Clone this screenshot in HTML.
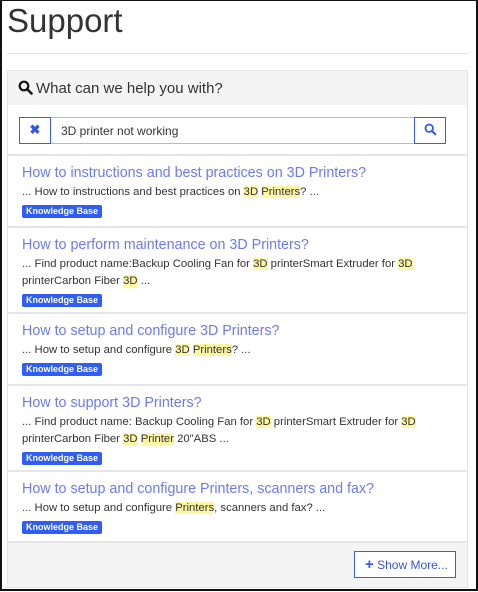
<!DOCTYPE html><html><head><style>
*{box-sizing:border-box;margin:0;padding:0}
body{width:478px;height:592px;background:#fff;font-family:"Liberation Sans",sans-serif;position:relative;overflow:hidden}
.frame{position:absolute;left:0;top:0;width:478px;height:591px;border:2px solid #111;border-top:1px solid #111}
h1{position:absolute;left:7px;top:2px;font-weight:normal;font-size:33px;color:#333;letter-spacing:0}
.hr{position:absolute;left:7px;top:53px;width:461px;height:1px;background:#e2e2e2}
.panel{position:absolute;left:7px;top:70px;width:461px;height:518px;border:1px solid #e4e4e4;background:#f4f4f4}
.head{height:34px;padding:9px 0 0 10px;font-size:15px;color:#333}
.srow{background:#fff;height:51px;position:relative;border-bottom:2px solid #e6e6e6}
.inp{position:absolute;left:11px;top:12px;width:427px;height:27px;border:1px solid #bbb;font-size:12px;color:#333;padding:6px 0 0 41px}
.bx{position:absolute;top:-1px;width:32px;height:27px;border:1px solid #3a5cf0;background:#fff;color:#2f57e8;text-align:center;font-weight:bold}
.item{background:#fff;padding:8px 14px 0;border-bottom:2px solid #e6e6e6}
.t{font-size:14.3px;color:#6d7af0;line-height:19px}
.s{font-size:11.3px;color:#333;line-height:17px;margin-top:1px}
.s span{background:#fdf7a4}
.b{display:inline-block;background:#2f5df5;color:#fff;font-size:9px;font-weight:bold;padding:1px 4px 2px;border-radius:2px;margin:2px 0 6px}
.btn{position:absolute;right:11px;bottom:9px;width:102px;height:27px;border:1px solid #3a5cf0;background:#fff;color:#3a55e0;font-size:12px;padding:6px 0 0 10px}
</style></head><body>
<div class="frame"></div>
<h1>Support</h1>
<div class="hr"></div>
<div class="panel">
<div class="head"><svg width="15" height="15" viewBox="0 0 15 15" style="vertical-align:-2px;margin-right:3px"><circle cx="6" cy="6" r="4.3" fill="none" stroke="#111" stroke-width="2.2"/><path d="M9 9l4.5 4.5" stroke="#111" stroke-width="2.6" stroke-linecap="round"/></svg>What can we help you with?</div>
<div class="srow"><div class="inp">3D printer not working
<div class="bx" style="left:-1px;font-size:13px;padding-top:4px">✖</div>
<div class="bx" style="right:-1px;padding-top:5px"><svg width="13" height="13" viewBox="0 0 15 15"><circle cx="6" cy="6" r="4.3" fill="none" stroke="#2f57e8" stroke-width="2"/><path d="M9 9l4 4" stroke="#2f57e8" stroke-width="2.4" stroke-linecap="round"/></svg></div></div></div>
<div class="item" style="height:72px"><div class="t">How to instructions and best practices on 3D Printers?</div><div class="s">... How to instructions and best practices on <span>3D</span> <span>Printers</span>? ...</div><div class="b">Knowledge Base</div></div>
<div class="item" style="height:86px"><div class="t">How to perform maintenance on 3D Printers?</div><div class="s">... Find product name:Backup Cooling Fan for <span>3D</span> printerSmart Extruder for <span>3D</span> printerCarbon Fiber <span>3D</span> ...</div><div class="b">Knowledge Base</div></div>
<div class="item" style="height:72px"><div class="t">How to setup and configure 3D Printers?</div><div class="s">... How to setup and configure <span>3D</span> <span>Printers</span>? ...</div><div class="b">Knowledge Base</div></div>
<div class="item" style="height:86px"><div class="t">How to support 3D Printers?</div><div class="s">... Find product name: Backup Cooling Fan for <span>3D</span> printerSmart Extruder for <span>3D</span> printerCarbon Fiber <span>3D</span> <span>Printer</span> 20"ABS ...</div><div class="b">Knowledge Base</div></div>
<div class="item" style="height:71px"><div class="t">How to setup and configure Printers, scanners and fax?</div><div class="s">... How to setup and configure <span>Printers</span>, scanners and fax? ...</div><div class="b">Knowledge Base</div></div>
<div class="btn"><b style="font-size:15px;line-height:10px">+</b> Show More...</div>
</div>
</body></html>
